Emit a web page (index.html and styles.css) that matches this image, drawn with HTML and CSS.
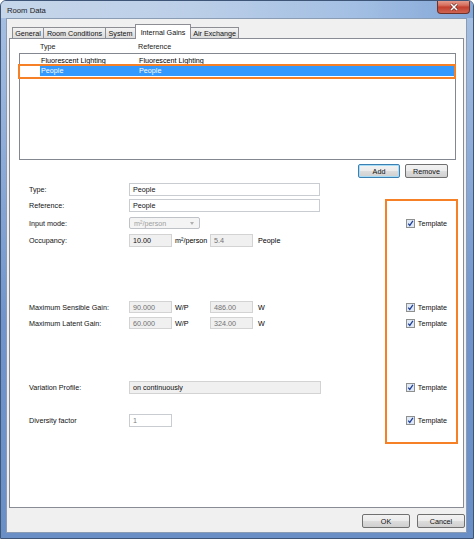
FILE: index.html
```html
<!DOCTYPE html>
<html lang="en">
<head>
    <meta charset="UTF-8">
    <meta name="viewport" content="width=device-width, initial-scale=1.0">
    <title>Room Data</title>
    <link rel="stylesheet" href="styles.css">
</head>
<body>

    <div class="window">
        <div class="titlebar">
            <span class="title">Room Data</span>
            <div class="close-btn">
                <svg width="10" height="8" viewBox="0 0 10 8">
                    <path d="M2 1 L8 7 M8 1 L2 7" stroke="#6b2b24" stroke-width="2.8" fill="none"/>
                    <path d="M2 1 L8 7 M8 1 L2 7" stroke="#fff" stroke-width="1.5" fill="none"/>
                </svg>
            </div>
        </div>

        <div class="client">
            <div class="tabs">
                <div class="tab t-general">General</div>
                <div class="tab t-room">Room Conditions</div>
                <div class="tab t-system">System</div>
                <div class="tab t-gains active">Internal Gains</div>
                <div class="tab t-air">Air Exchange</div>
            </div>

            <div class="panel">
                <!-- Lista de ganancias internas -->
                <div class="list-head">
                    <span></span><span>Type</span><span>Reference</span>
                </div>
                <div class="list">
                    <div class="list-row">
                        <span></span><span class="cell">Fluorescent Lighting</span><span class="cell">Fluorescent Lighting</span>
                    </div>
                    <div class="list-row selected">
                        <span></span><span class="cell">People</span><span class="cell">People</span>
                    </div>
                </div>

                <div class="list-buttons">
                    <button class="btn btn-default add">Add</button>
                    <button class="btn remove">Remove</button>
                </div>

                <!-- Propiedades del elemento seleccionado -->
                <div class="form">
                    <div class="row r-type">
                        <span class="label">Type:</span>
                        <div class="field wide">People</div>
                    </div>
                    <div class="row r-ref">
                        <span class="label">Reference:</span>
                        <div class="field wide">People</div>
                    </div>
                    <div class="row r-mode">
                        <span class="label">Input mode:</span>
                        <div class="combo">m²/person<span class="arrow"></span></div>
                        <span class="template">
                            <svg class="check" width="9" height="9" viewBox="0 0 9 9"><rect x="0.5" y="0.5" width="8" height="8" fill="#dfe9f5" stroke="#8e8f8f"/><path d="M2.2 4.6 L3.8 6.4 L6.9 1.9" fill="none" stroke="#21409a" stroke-width="1.3"/></svg>
                            Template
                        </span>
                    </div>
                    <div class="row r-occ">
                        <span class="label">Occupancy:</span>
                        <div class="field small ro dark">10.00</div>
                        <span class="unit">m²/person</span>
                        <div class="field small ro">5.4</div>
                        <span class="unit2">People</span>
                    </div>
                    <div class="row r-sens">
                        <span class="label">Maximum Sensible Gain:</span>
                        <div class="field small ro">90.000</div>
                        <span class="unit">W/P</span>
                        <div class="field small ro">486.00</div>
                        <span class="unit2">W</span>
                        <span class="template">
                            <svg class="check" width="9" height="9" viewBox="0 0 9 9"><rect x="0.5" y="0.5" width="8" height="8" fill="#dfe9f5" stroke="#8e8f8f"/><path d="M2.2 4.6 L3.8 6.4 L6.9 1.9" fill="none" stroke="#21409a" stroke-width="1.3"/></svg>
                            Template
                        </span>
                    </div>
                    <div class="row r-lat">
                        <span class="label">Maximum Latent Gain:</span>
                        <div class="field small ro">60.000</div>
                        <span class="unit">W/P</span>
                        <div class="field small ro">324.00</div>
                        <span class="unit2">W</span>
                        <span class="template">
                            <svg class="check" width="9" height="9" viewBox="0 0 9 9"><rect x="0.5" y="0.5" width="8" height="8" fill="#dfe9f5" stroke="#8e8f8f"/><path d="M2.2 4.6 L3.8 6.4 L6.9 1.9" fill="none" stroke="#21409a" stroke-width="1.3"/></svg>
                            Template
                        </span>
                    </div>
                    <div class="row r-var">
                        <span class="label">Variation Profile:</span>
                        <div class="field profile ro dark">on continuously</div>
                        <span class="template">
                            <svg class="check" width="9" height="9" viewBox="0 0 9 9"><rect x="0.5" y="0.5" width="8" height="8" fill="#dfe9f5" stroke="#8e8f8f"/><path d="M2.2 4.6 L3.8 6.4 L6.9 1.9" fill="none" stroke="#21409a" stroke-width="1.3"/></svg>
                            Template
                        </span>
                    </div>
                    <div class="row r-div">
                        <span class="label">Diversity factor</span>
                        <div class="field small gray">1</div>
                        <span class="template">
                            <svg class="check" width="9" height="9" viewBox="0 0 9 9"><rect x="0.5" y="0.5" width="8" height="8" fill="#dfe9f5" stroke="#8e8f8f"/><path d="M2.2 4.6 L3.8 6.4 L6.9 1.9" fill="none" stroke="#21409a" stroke-width="1.3"/></svg>
                            Template
                        </span>
                    </div>
                </div>

                <div class="mark mark-row"></div>
                <div class="mark mark-template"></div>
            </div>

            <div class="dialog-buttons">
                <button class="btn ok">OK</button>
                <button class="btn cancel">Cancel</button>
            </div>
        </div>
    </div>

</body>
</html>
```

FILE: styles.css
```css
        body {
            margin: 0;
            padding: 0;
            font-family: "Liberation Sans", Arial, sans-serif;
            font-size: 7.2px;
            color: #000;
            background-color: #fff;
        }

        .window {
            width: 474px;
            height: 539px;
            box-sizing: border-box;
            border: 1px solid #3e5577;
            border-radius: 6px 6px 0 0;
            background: linear-gradient(to bottom, #a8c1e3, #7094cb 60%, #6a8fc7);
            display: flex;
            flex-direction: column;
            overflow: hidden;
        }

        .titlebar {
            height: 17px;
            flex: none;
            display: flex;
            align-items: flex-start;
            background: linear-gradient(to right, #c6d6ea 0%, #bccfe8 40%, #a3bfe3 75%, #84a7d8 100%);
        }

        .title {
            font-size: 7.7px;
            color: #1b1b1b;
            margin: 5px 0 0 6px;
        }

        .close-btn {
            margin: -1px 3px 0 auto;
            width: 33px;
            height: 14px;
            box-sizing: border-box;
            border: 1px solid #6e3129;
            border-top: none;
            border-radius: 0 0 4px 4px;
            background: linear-gradient(to bottom, #e7a597 0%, #d7705f 40%, #c2402f 55%, #cf6452 100%);
            display: flex;
            align-items: center;
            justify-content: center;
        }

        .client {
            flex: none;
            width: 461px;
            height: 515px;
            box-sizing: border-box;
            margin: 0 6px 0 5px;
            border: 1px solid #8a9bb4;
            background-color: #f0f0f0;
            display: flex;
            flex-direction: column;
        }

        /* Pestañas */
        .tabs {
            display: flex;
            align-items: flex-end;
            height: 14px;
            margin: 5px 0 0 5px;
        }

        .tab {
            box-sizing: border-box;
            height: 11px;
            margin-left: -1px;
            border: 1px solid #8c8e94;
            border-bottom: none;
            background: linear-gradient(to bottom, #f3f3f3, #e6e6e6 50%, #dcdcdc);
            display: flex;
            align-items: center;
            justify-content: center;
            color: #111;
        }

        .tab.active {
            height: 15px;
            margin-bottom: -1px;
            background: #fff;
            position: relative;
            z-index: 1;
        }

        .t-general { width: 32px; margin-left: 0; }
        .t-room { width: 63px; }
        .t-system { width: 31px; }
        .t-gains { width: 56px; }
        .t-air { width: 49px; }

        .panel {
            position: relative;
            width: 455px;
            height: 470px;
            box-sizing: border-box;
            margin-left: 2px;
            border: 1px solid #898c95;
            background-color: #fff;
        }

        /* Lista */
        .list-head {
            display: grid;
            grid-template-columns: 21px 98px 1fr;
            width: 437px;
            height: 14px;
            margin-left: 9px;
            line-height: 15px;
            color: #1a1a1a;
        }

        .list {
            width: 437px;
            height: 107px;
            box-sizing: border-box;
            margin-left: 9px;
            padding-top: 2px;
            border: 1px solid #828790;
        }

        .list-row {
            display: grid;
            grid-template-columns: 20px 98px 1fr;
            height: 10px;
            line-height: 10px;
        }

        .list-row .cell {
            padding-left: 1px;
        }

        .list-row.selected .cell {
            background-color: #3399ff;
            color: #fff;
        }

        .list-buttons {
            display: flex;
            justify-content: flex-end;
            gap: 5px;
            height: 14px;
            margin-top: 4px;
            padding-right: 15px;
        }

        .btn {
            box-sizing: border-box;
            height: 14px;
            padding: 0;
            border: 1px solid #707070;
            border-radius: 2px;
            background: linear-gradient(to bottom, #f2f2f2 0%, #ebebeb 50%, #dddddd 51%, #cfcfcf 100%);
            font-family: "Liberation Sans", Arial, sans-serif;
            font-size: 7.2px;
            color: #111;
        }

        .btn-default {
            border-color: #3c7fb1;
            box-shadow: inset 0 0 0 1px #a7dcf7;
        }

        .add { width: 42px; }
        .remove { width: 43px; }

        /* Formulario */
        .form {
            padding-left: 19px;
            margin-top: 5px;
        }

        .row {
            display: flex;
            align-items: center;
        }

        .r-type { margin-top: 0; height: 13px; }
        .r-ref { margin-top: 3px; height: 13px; }
        .r-mode { margin-top: 5px; height: 12px; }
        .r-occ { margin-top: 5px; height: 13px; }
        .r-sens { margin-top: 54px; height: 12px; }
        .r-lat { margin-top: 4px; height: 12px; }
        .r-var { margin-top: 52px; height: 13px; }
        .r-div { margin-top: 20px; height: 13px; }

        .label {
            width: 100px;
            flex: none;
            color: #111;
        }

        .field {
            box-sizing: border-box;
            height: 100%;
            padding-left: 3px;
            border: 1px solid #c9ccd1;
            background-color: #fff;
            display: flex;
            align-items: center;
            color: #111;
        }

        .field.ro {
            background-color: #f0f0f0;
            border-color: #d3d3d3;
            color: #707070;
        }

        .field.ro.dark {
            color: #111;
        }

        .field.gray {
            color: #808080;
        }

        .wide { width: 191px; }
        .profile { width: 192px; }
        .small { width: 43px; }

        .combo {
            box-sizing: border-box;
            width: 71px;
            height: 12px;
            padding-left: 4px;
            border: 1px solid #bfc3c7;
            border-radius: 2px;
            background-color: #f4f4f4;
            color: #a0a0a0;
            display: flex;
            align-items: center;
        }

        .arrow {
            margin: 1px 5px 0 auto;
            border-left: 2.5px solid transparent;
            border-right: 2.5px solid transparent;
            border-top: 3px solid #b0b0b0;
        }

        .unit {
            width: 35px;
            flex: none;
            padding-left: 3px;
        }

        .unit2 {
            padding-left: 5px;
        }

        .template {
            margin: 0 16px 0 auto;
            display: flex;
            align-items: center;
            gap: 3px;
            color: #111;
        }

        .check {
            display: block;
        }

        /* Marcas naranjas */
        .mark {
            position: absolute;
            box-sizing: border-box;
            border: 2px solid #f58026;
        }

        .mark-row {
            left: 8px;
            top: 25px;
            width: 438px;
            height: 15px;
        }

        .mark-template {
            left: 375px;
            top: 160px;
            width: 73px;
            height: 245px;
        }

        .dialog-buttons {
            display: flex;
            justify-content: flex-end;
            gap: 7px;
            margin-top: 6px;
            padding-right: 1px;
        }

        .ok, .cancel {
            width: 48px;
        }
```
